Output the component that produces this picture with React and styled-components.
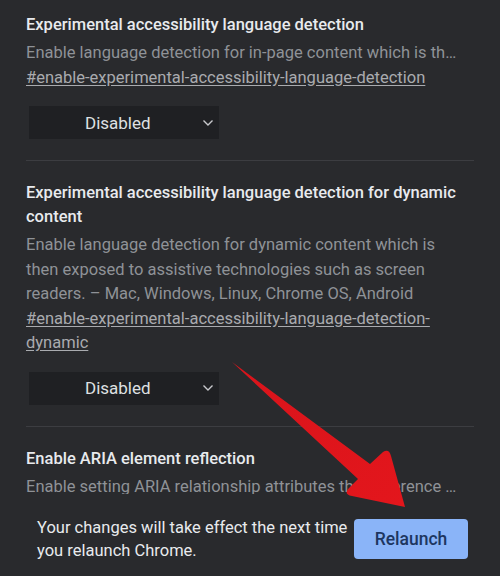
import React from "react"
import styled, { createGlobalStyle } from "styled-components"

const GlobalStyle = createGlobalStyle`
  html, body {
    margin: 0;
    padding: 0;
    background: #292a2d;
  }
  * { box-sizing: border-box; }
`

const flags = [
  {
    title: "Experimental accessibility language detection",
    desc: "Enable language detection for in-page content which is then exposed to assistive technologies such as screen readers. – Mac, Windows, Linux, Chrome OS, Android",
    clamp: true,
    link: "#enable-experimental-accessibility-language-detection",
  },
  {
    title: "Experimental accessibility language detection for dynamic content",
    desc: "Enable language detection for dynamic content which is then exposed to assistive technologies such as screen readers. – Mac, Windows, Linux, Chrome OS, Android",
    link: "#enable-experimental-accessibility-language-detection-dynamic",
  },
  {
    title: "Enable ARIA element reflection",
    desc: "Enable setting ARIA relationship attributes that reference elements directly without needing an id.",
    clamp: true,
    link: "#enable-aria-element-reflection",
  },
]

function Chevron() {
  return (
    <svg width="12" height="8" viewBox="0 0 12 8">
      <path d="M1.5 1.5 L6 6 L10.5 1.5" fill="none" stroke="#c8c9cc" strokeWidth="1.4" />
    </svg>
  )
}

function Flag({ flag }) {
  return (
    <FlagItem>
      <Title>{flag.title}</Title>
      <Desc $clamp={flag.clamp}>{flag.desc}</Desc>
      <Link href="#">{flag.link}</Link>
      <Select>
        <span>Disabled</span>
        <Chevron />
      </Select>
    </FlagItem>
  )
}

function App() {
  return (
    <>
      <GlobalStyle />
      <Page>
        <List>
          {flags.map((f) => (
            <Flag key={f.link} flag={f} />
          ))}
        </List>
        <Footer>
          <Notice>Your changes will take effect the next time you relaunch Chrome.</Notice>
          <Relaunch>Relaunch</Relaunch>
        </Footer>
        <Arrow viewBox="0 0 500 576">
          <defs>
            <linearGradient id="red" x1="0" y1="0" x2="1" y2="1">
              <stop offset="0" stopColor="#d9141b" />
              <stop offset="1" stopColor="#e3161c" />
            </linearGradient>
          </defs>
          <path
            d="M232 362 L370 464 L383 452 Q389 448 391 456 L405 507 L352 496 Q343 494 349 488 L358 479 Z"
            fill="url(#red)"
          />
        </Arrow>
      </Page>
    </>
  )
}

export default App

const Page = styled.div`
  position: relative;
  width: 500px;
  height: 576px;
  display: flex;
  flex-direction: column;
  background: #292a2d;
  font-family: Roboto, "Liberation Sans", sans-serif;
  overflow: hidden;
`

const List = styled.div`
  flex: 1;
  overflow: hidden;
  padding: 0 26px;
`

const FlagItem = styled.div`
  padding: 20px 14px 21px 0;
  border-bottom: 1px solid #3c3d41;
  &:first-child {
    padding-top: 13px;
  }
`

const Title = styled.div`
  font-size: 16.5px;
  font-weight: 500;
  line-height: 24px;
  color: #e8eaed;
  margin-bottom: 4px;
`

const Desc = styled.div`
  font-size: 16.5px;
  line-height: 24.5px;
  color: #8f9297;
  ${(p) =>
    p.$clamp &&
    `
    white-space: nowrap;
    overflow: hidden;
    text-overflow: ellipsis;
  `}
`

const Link = styled.a`
  display: block;
  font-size: 16.5px;
  line-height: 24.5px;
  color: #a9abaf;
  text-decoration: underline;
  text-underline-offset: 2px;
`

const Select = styled.div`
  margin: 16px 0 0 3px;
  width: 190px;
  height: 33px;
  background: #1f2023;
  display: flex;
  align-items: center;
  justify-content: space-between;
  padding: 0 5px 0 56px;
  font-size: 17px;
  color: #dfe0e2;
`

const Footer = styled.div`
  height: 82px;
  flex-shrink: 0;
  display: flex;
  align-items: center;
  padding: 8px 32px 0 37px;
  background: #292a2d;
`

const Notice = styled.div`
  flex: 1;
  margin-right: 4px;
  font-size: 16.5px;
  line-height: 23px;
  color: #e8eaed;
`

const Relaunch = styled.button`
  width: 114px;
  height: 40px;
  border: none;
  border-radius: 4px;
  background: #8ab4f8;
  color: #1d3660;
  font-family: inherit;
  font-size: 17.5px;
  font-weight: 500;
`

const Arrow = styled.svg`
  position: absolute;
  left: 0;
  top: 0;
  width: 500px;
  height: 576px;
  pointer-events: none;
`
